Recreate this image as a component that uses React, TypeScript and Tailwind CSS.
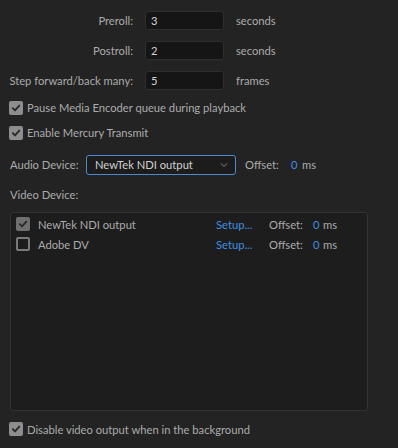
import { ChevronDown } from "lucide-react";

function Check({ checked, dim }: { checked: boolean; dim?: boolean }) {
  if (!checked) {
    return <div className="w-[14px] h-[14px] shrink-0 rounded-[2px] border-2 border-[#7a7a7a]" />;
  }
  return (
    <div
      className={`w-[14px] h-[14px] shrink-0 rounded-[2px] flex items-center justify-center ${
        dim ? "bg-[#6f6f6f]" : "bg-[#8e8e8e]"
      }`}
    >
      <svg width="10" height="10" viewBox="0 0 10 10">
        <path d="M1.8 5.2 L4 7.4 L8.3 2.6" fill="none" stroke="#2a2a2a" strokeWidth="1.9" strokeLinecap="round" strokeLinejoin="round" />
      </svg>
    </div>
  );
}

function NumRow({ label, value, unit }: { label: string; value: string; unit: string }) {
  return (
    <div className="flex items-center h-[19px]">
      <div className="w-[133px] text-right">{label}</div>
      <div className="ml-[12px] w-[79px] h-[19px] rounded-[3px] bg-[#151515] border border-[#2e2e2e] flex items-center pl-[5px] text-[#d2d2d2]">
        {value}
      </div>
      <div className="ml-[12px]">{unit}</div>
    </div>
  );
}

function DeviceRow({ name, checked }: { name: string; checked: boolean }) {
  return (
    <div className="flex items-center h-[20px]">
      <Check checked={checked} dim />
      <div className="ml-[8px] w-[178px]">{name}</div>
      <div className="w-[53px] text-[#3f8fe0]">Setup...</div>
      <div className="w-[44px]">Offset:</div>
      <div className="w-[10px] text-[#3f8fe0]">0</div>
      <div>ms</div>
    </div>
  );
}

export default function App() {
  return (
    <div
      className="w-[398px] h-[448px] bg-[#232323] text-[#ababab] text-[11.2px] leading-none overflow-hidden"
      style={{ fontFamily: "Lato, 'Noto Sans', sans-serif" }}
    >
      {/* numeric fields */}
      <div className="pt-[11px] flex flex-col gap-[11px]">
        <NumRow label="Preroll:" value="3" unit="seconds" />
        <NumRow label="Postroll:" value="2" unit="seconds" />
        <NumRow label="Step forward/back many:" value="5" unit="frames" />
      </div>

      {/* options */}
      <div className="pl-[9px] mt-[11px] flex flex-col gap-[11px]">
        <div className="flex items-center h-[14px] gap-[4px]">
          <Check checked />
          <span>Pause Media Encoder queue during playback</span>
        </div>
        <div className="flex items-center h-[14px] gap-[4px]">
          <Check checked />
          <span>Enable Mercury Transmit</span>
        </div>
      </div>

      {/* audio device */}
      <div className="mt-[15px] pl-[10px] flex items-center h-[20px]">
        <div className="w-[76px]">Audio Device:</div>
        <div className="w-[150px] h-[20px] rounded-[3px] border border-[#4a8ad0] bg-[#1c1c1c] flex items-center pl-[8px] pr-[5px] text-[#d0d0d0]">
          <span className="flex-1">NewTek NDI output</span>
          <ChevronDown size={12} strokeWidth={1.5} className="text-[#a0a0a0]" />
        </div>
        <div className="ml-[9px] w-[46px]">Offset:</div>
        <div className="w-[11px] text-[#3f8fe0]">0</div>
        <div>ms</div>
      </div>

      <div className="pl-[10px] mt-[14px]">Video Device:</div>

      {/* device list */}
      <div className="ml-[10px] mt-[12px] w-[358px] h-[199px] rounded-[3px] border border-[#333333] bg-[#1d1d1d] pl-[5px] pt-[1px]">
        <DeviceRow name="NewTek NDI output" checked />
        <DeviceRow name="Adobe DV" checked={false} />
      </div>

      <div className="pl-[9px] mt-[11px] flex items-center h-[14px] gap-[4px]">
        <Check checked />
        <span>Disable video output when in the background</span>
      </div>
    </div>
  );
}
